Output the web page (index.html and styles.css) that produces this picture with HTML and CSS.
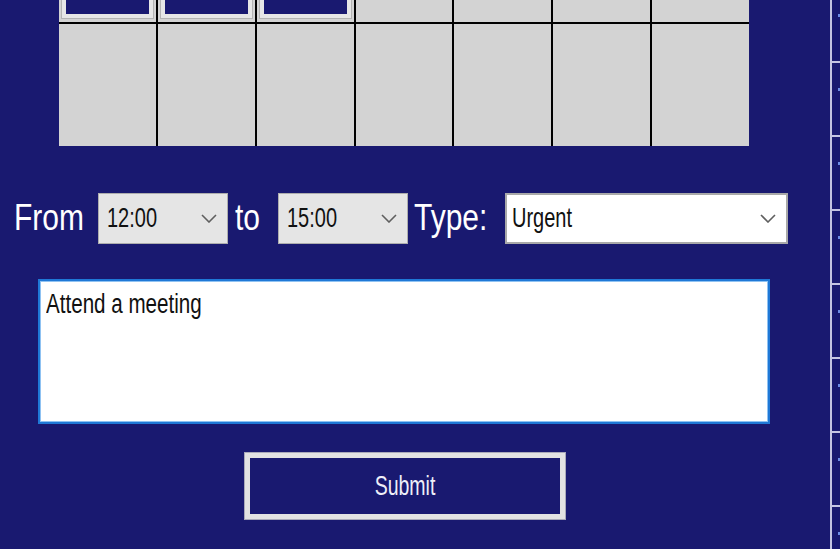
FILE: index.html
```html
<!DOCTYPE html>
<html>
<head>
<meta charset="utf-8">
<link rel="stylesheet" href="styles.css">
</head>
<body>
<div class="app">
  <main class="main">
    <div class="calendar">
      <div class="cell"><div class="day-btn"></div></div>
      <div class="cell"><div class="day-btn"></div></div>
      <div class="cell"><div class="day-btn"></div></div>
      <div class="cell"></div>
      <div class="cell"></div>
      <div class="cell"></div>
      <div class="cell"></div>
      <div class="cell"></div>
      <div class="cell"></div>
      <div class="cell"></div>
      <div class="cell"></div>
      <div class="cell"></div>
      <div class="cell"></div>
      <div class="cell"></div>
    </div>

    <div class="form-row">
      <span class="label label-from"><span class="tall">From</span></span>
      <div class="combo combo-time">
        <span class="combo-text"><span class="tall-sm">12:00</span></span>
        <svg class="chev" width="16" height="9" viewBox="0 0 16 9"><polyline points="1,1 8,8 15,1" fill="none" stroke="#5f5f5f" stroke-width="1.6"/></svg>
      </div>
      <span class="label label-to"><span class="tall">to</span></span>
      <div class="combo combo-time">
        <span class="combo-text"><span class="tall-sm">15:00</span></span>
        <svg class="chev" width="16" height="9" viewBox="0 0 16 9"><polyline points="1,1 8,8 15,1" fill="none" stroke="#5f5f5f" stroke-width="1.6"/></svg>
      </div>
      <span class="label label-type"><span class="tall">Type:</span></span>
      <div class="combo combo-type">
        <span class="combo-text"><span class="tall-sm">Urgent</span></span>
        <svg class="chev" width="16" height="9" viewBox="0 0 16 9"><polyline points="1,1 8,8 15,1" fill="none" stroke="#5f5f5f" stroke-width="1.6"/></svg>
      </div>
    </div>

    <div class="note"><span class="tall-sm">Attend a meeting</span></div>

    <div class="submit"><span class="tall-sm">Submit</span></div>
  </main>
  <aside class="strip">
    <div class="strip-row"><i class="dot"></i></div>
    <div class="strip-row"><i class="dot"></i></div>
    <div class="strip-row"><i class="dot"></i></div>
    <div class="strip-row"><i class="dot"></i></div>
    <div class="strip-row"><i class="dot"></i></div>
    <div class="strip-row"><i class="dot"></i></div>
    <div class="strip-row"><i class="dot"></i></div>
    <div class="strip-row"><i class="dot"></i></div>
  </aside>
</div>
</body>
</html>
```

FILE: styles.css
```css
html, body {
  margin: 0;
  padding: 0;
  background: #191970;
  overflow: hidden;
  width: 840px;
  height: 549px;
  font-family: "Liberation Sans", Arial, sans-serif;
}

.app {
  display: flex;
  width: 840px;
  height: 549px;
  overflow: hidden;
}

.main {
  flex: 0 0 808px;
  width: 808px;
  margin-right: 22px;
  display: flex;
  flex-direction: column;
  align-items: center;
}

/* calendar grid */
.calendar {
  margin-top: -100px;
  width: 690px;
  display: grid;
  grid-template-columns: repeat(7, 1fr);
  grid-template-rows: 122px 122px;
  gap: 2px;
  background: #000;
}

.cell {
  background: #d3d3d3;
  display: flex;
  padding: 3px 3px 4px 3px;
}

.day-btn {
  flex: 1;
  background: #191970;
  border: 4px solid #e6e6e6;
  box-shadow: 0 0 0 1px #b3b3b3;
}

/* form row */
.form-row {
  align-self: stretch;
  margin-top: 47px;
  display: flex;
  align-items: center;
  height: 51px;
}

.label {
  color: #ffffff;
  font-size: 30px;
  line-height: 51px;
  box-sizing: border-box;
  white-space: nowrap;
}

.label-from {
  width: 98px;
  padding-left: 14px;
}

.label-to {
  width: 50px;
  padding-left: 7px;
}

.label-type {
  width: 97px;
  padding-left: 6px;
}

.tall {
  display: inline-block;
  transform: scaleY(1.2);
  transform-origin: center 60%;
}

.tall-sm {
  display: inline-block;
  transform: scaleY(1.38);
}

.combo {
  box-sizing: border-box;
  height: 51px;
  display: flex;
  align-items: center;
  justify-content: space-between;
  padding: 0 10px 0 8px;
}

.combo-time {
  width: 130px;
  background: #e5e5e5;
  border: 1px solid #adadad;
}

.combo-type {
  width: 283px;
  background: #ffffff;
  border: 2px solid #a9a9a9;
  padding-left: 5px;
}

.combo-text {
  font-size: 20px;
  color: #111111;
}

.chev {
  display: block;
}

/* note */
.note {
  margin-top: 35px;
  box-sizing: border-box;
  width: 732px;
  height: 145px;
  background: #ffffff;
  border: 2px solid #1f78d6;
  box-shadow: inset 0 0 0 1px #8fc2f2;
  padding: 10px 6px;
  font-size: 20.6px;
  color: #111111;
}

/* submit */
.submit {
  margin-top: 29px;
  box-sizing: border-box;
  width: 320px;
  height: 66px;
  margin-left: 2px;
  background: #191970;
  border: 5px solid #e2e2e2;
  box-shadow: 0 0 0 1px #a9a9b9;
  display: flex;
  align-items: center;
  justify-content: center;
  color: #eeeef8;
  font-size: 19.5px;
}

/* right strip */
.strip {
  flex: 0 0 10px;
  border-left: 2px solid #c4c4e2;
  margin-top: -11px;
  display: flex;
  flex-direction: column;
}

.strip-row {
  flex: 0 0 72px;
  border-bottom: 2px solid #c4c4e2;
  position: relative;
}

.dot {
  position: absolute;
  left: 6px;
  top: 25px;
  width: 3px;
  height: 3px;
  background: #6d8de6;
}
```
